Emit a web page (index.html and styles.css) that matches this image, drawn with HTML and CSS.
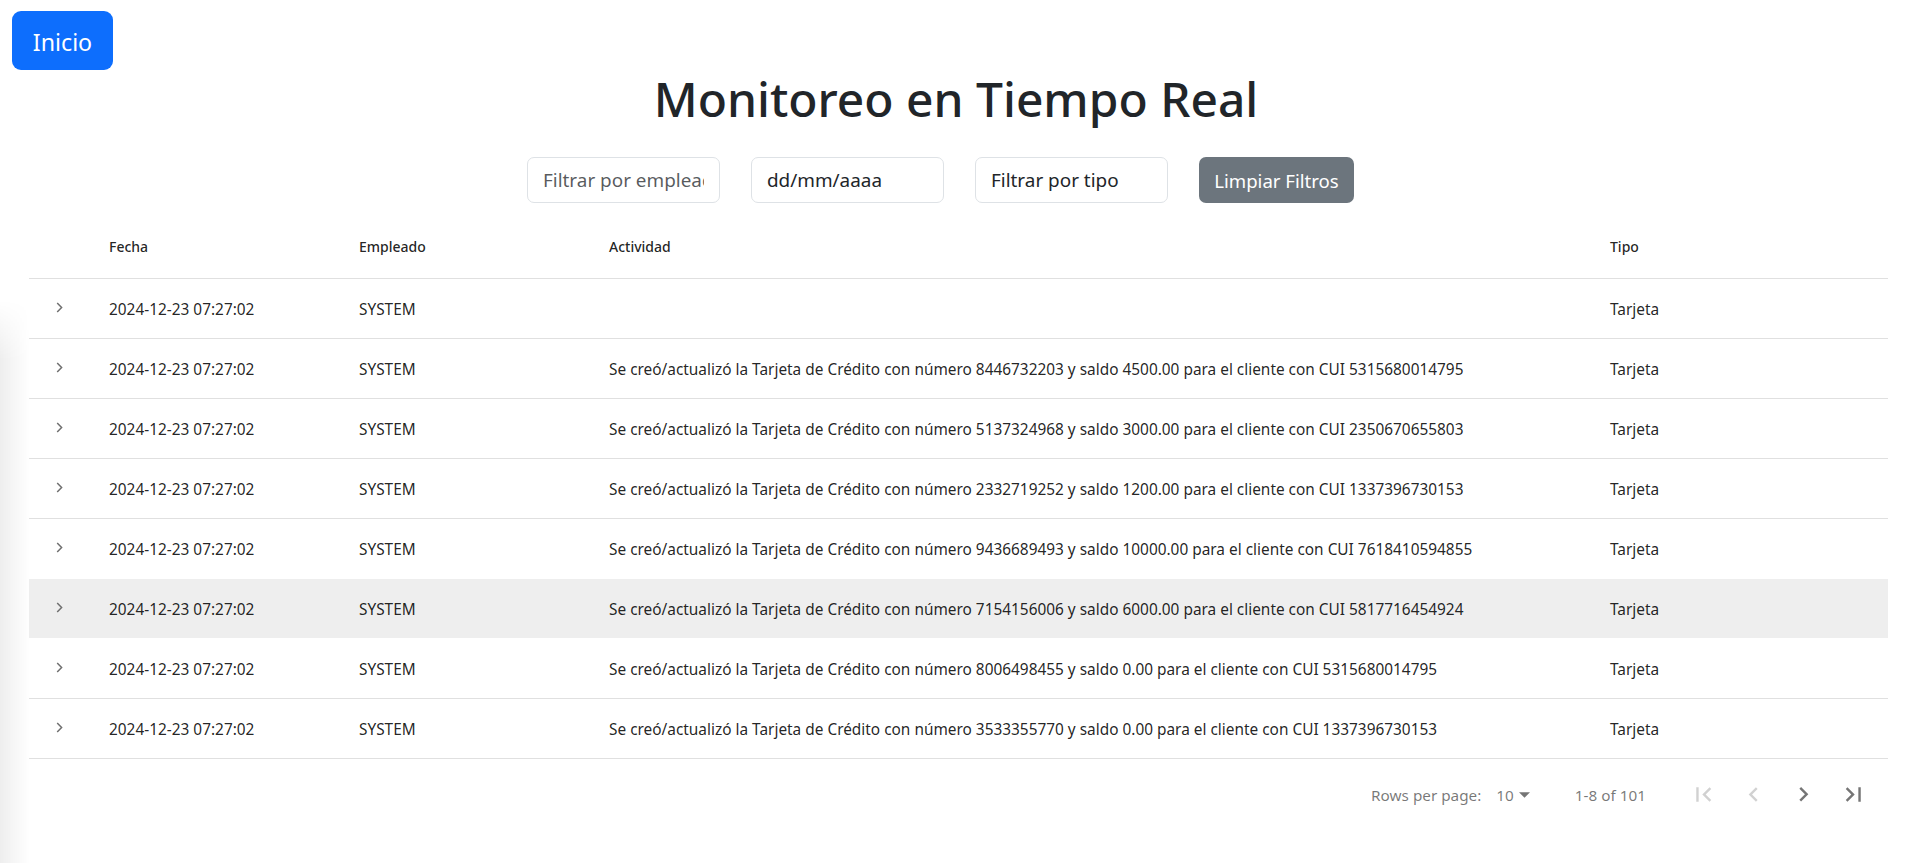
FILE: index.html
```html
<!DOCTYPE html>
<html lang="es">
<head>
<meta charset="utf-8">
<title>Monitoreo en Tiempo Real</title>
<link rel="stylesheet" href="styles.css">
</head>
<body>
<div class="edge-shadow"></div>
<button class="btn-home">Inicio</button>
<h1 class="title">Monitoreo en Tiempo Real</h1>
<div class="filters">
  <input class="filter" type="text" placeholder="Filtrar por empleado">
  <input class="filter" type="text" value="dd/mm/aaaa">
  <select class="filter filter-select"><option>Filtrar por tipo</option></select>
  <button class="clear-btn">Limpiar Filtros</button>
</div>

<div class="table">
  <div class="thead grid">
    <div></div>
    <div class="cell">Fecha</div>
    <div class="cell">Empleado</div>
    <div class="cell">Actividad</div>
    <div class="cell">Tipo</div>
  </div>

  <div class="row grid">
    <div class="expander"><svg class="chev" viewBox="0 0 7 11"><polyline points="1.2,1 5.6,5.5 1.2,10"/></svg></div>
    <div class="cell">2024-12-23 07:27:02</div>
    <div class="cell">SYSTEM</div>
    <div class="cell"></div>
    <div class="cell">Tarjeta</div>
  </div>
  <div class="row grid">
    <div class="expander"><svg class="chev" viewBox="0 0 7 11"><polyline points="1.2,1 5.6,5.5 1.2,10"/></svg></div>
    <div class="cell">2024-12-23 07:27:02</div>
    <div class="cell">SYSTEM</div>
    <div class="cell">Se creó/actualizó la Tarjeta de Crédito con número 8446732203 y saldo 4500.00 para el cliente con CUI 5315680014795</div>
    <div class="cell">Tarjeta</div>
  </div>
  <div class="row grid">
    <div class="expander"><svg class="chev" viewBox="0 0 7 11"><polyline points="1.2,1 5.6,5.5 1.2,10"/></svg></div>
    <div class="cell">2024-12-23 07:27:02</div>
    <div class="cell">SYSTEM</div>
    <div class="cell">Se creó/actualizó la Tarjeta de Crédito con número 5137324968 y saldo 3000.00 para el cliente con CUI 2350670655803</div>
    <div class="cell">Tarjeta</div>
  </div>
  <div class="row grid">
    <div class="expander"><svg class="chev" viewBox="0 0 7 11"><polyline points="1.2,1 5.6,5.5 1.2,10"/></svg></div>
    <div class="cell">2024-12-23 07:27:02</div>
    <div class="cell">SYSTEM</div>
    <div class="cell">Se creó/actualizó la Tarjeta de Crédito con número 2332719252 y saldo 1200.00 para el cliente con CUI 1337396730153</div>
    <div class="cell">Tarjeta</div>
  </div>
  <div class="row grid">
    <div class="expander"><svg class="chev" viewBox="0 0 7 11"><polyline points="1.2,1 5.6,5.5 1.2,10"/></svg></div>
    <div class="cell">2024-12-23 07:27:02</div>
    <div class="cell">SYSTEM</div>
    <div class="cell">Se creó/actualizó la Tarjeta de Crédito con número 9436689493 y saldo 10000.00 para el cliente con CUI 7618410594855</div>
    <div class="cell">Tarjeta</div>
  </div>
  <div class="row grid row-hover">
    <div class="expander"><svg class="chev" viewBox="0 0 7 11"><polyline points="1.2,1 5.6,5.5 1.2,10"/></svg></div>
    <div class="cell">2024-12-23 07:27:02</div>
    <div class="cell">SYSTEM</div>
    <div class="cell">Se creó/actualizó la Tarjeta de Crédito con número 7154156006 y saldo 6000.00 para el cliente con CUI 5817716454924</div>
    <div class="cell">Tarjeta</div>
  </div>
  <div class="row grid">
    <div class="expander"><svg class="chev" viewBox="0 0 7 11"><polyline points="1.2,1 5.6,5.5 1.2,10"/></svg></div>
    <div class="cell">2024-12-23 07:27:02</div>
    <div class="cell">SYSTEM</div>
    <div class="cell">Se creó/actualizó la Tarjeta de Crédito con número 8006498455 y saldo 0.00 para el cliente con CUI 5315680014795</div>
    <div class="cell">Tarjeta</div>
  </div>
  <div class="row grid">
    <div class="expander"><svg class="chev" viewBox="0 0 7 11"><polyline points="1.2,1 5.6,5.5 1.2,10"/></svg></div>
    <div class="cell">2024-12-23 07:27:02</div>
    <div class="cell">SYSTEM</div>
    <div class="cell">Se creó/actualizó la Tarjeta de Crédito con número 3533355770 y saldo 0.00 para el cliente con CUI 1337396730153</div>
    <div class="cell">Tarjeta</div>
  </div>

  <div class="pagination">
    <span class="rpp-label">Rows per page:</span>
    <span class="rpp-select">10<svg class="caret" viewBox="0 0 12 6"><path d="M0 0h12L6 6z"/></svg></span>
    <span class="range">1-8 of 101</span>
    <div class="pager">
      <button class="pg disabled" aria-label="First Page"><svg viewBox="0 0 24 24"><path d="M18.41 16.59L13.82 12l4.59-4.59L17 6l-6 6 6 6zM6 6h2v12H6z"/></svg></button>
      <button class="pg disabled" aria-label="Previous Page"><svg viewBox="0 0 24 24"><path d="M15.41 7.41L14 6l-6 6 6 6 1.41-1.41L10.83 12z"/></svg></button>
      <button class="pg" aria-label="Next Page"><svg viewBox="0 0 24 24"><path d="M8.59 16.34l4.58-4.59-4.58-4.59L10 5.75l6 6-6 6z"/></svg></button>
      <button class="pg" aria-label="Last Page"><svg viewBox="0 0 24 24"><path d="M5.59 7.41L10.18 12l-4.59 4.59L7 18l6-6-6-6zM16 6h2v12h-2z"/></svg></button>
    </div>
  </div>
</div>
</body>
</html>
```
FILE: styles.css
```css
* { box-sizing: border-box; }

body {
  margin: 0;
  font-family: "Noto Sans", "Open Sans", sans-serif;
  color: #212529;
  background: #fff;
}

.edge-shadow {
  position: fixed;
  left: 0;
  top: 300px;
  bottom: 0;
  width: 30px;
  background: linear-gradient(to right, rgba(0, 0, 0, 0.065), rgba(0, 0, 0, 0));
  -webkit-mask-image: linear-gradient(to bottom, transparent, #000 60px);
  mask-image: linear-gradient(to bottom, transparent, #000 60px);
  pointer-events: none;
}

.btn-home {
  display: flex;
  align-items: center;
  justify-content: center;
  width: 101px;
  height: 59px;
  margin: 11px 0 0 12px;
  padding: 4px 0 0;
  border: none;
  border-radius: 9px;
  background: #0d6efd;
  color: #fff;
  font-family: inherit;
  font-size: 23.2px;
  line-height: 1;
}

.title {
  margin: 1px 0 0;
  font-size: 47.9px;
  font-weight: 500;
  line-height: 56px;
  text-align: center;
  color: #212529;
}

.filters {
  display: flex;
  justify-content: center;
  margin-top: 30px;
}

.filter {
  width: 193px;
  height: 46px;
  margin: 0 31px 0 0;
  padding: 0 15px;
  border: 1px solid #dee2e6;
  border-radius: 7px;
  background: #fff;
  font-family: inherit;
  font-size: 18.9px;
  color: #212529;
  outline: none;
}

.filter::placeholder {
  color: rgba(33, 37, 41, 0.75);
}

.filter-select {
  -webkit-appearance: none;
  appearance: none;
}

.clear-btn {
  width: 155px;
  height: 46px;
  margin: 0 31px 0 0;
  padding: 0;
  border: none;
  border-radius: 7px;
  background: #6c757d;
  color: #fff;
  font-family: inherit;
  font-size: 18.6px;
}

.table {
  margin: 12px 24px 0 29px;
}

.grid {
  display: grid;
  grid-template-columns: 60px 250px 250px 1001px 1fr;
  align-items: center;
}

.thead {
  height: 64px;
  border-bottom: 1px solid #e0e0e0;
  font-size: 14px;
  font-weight: 500;
  color: rgba(0, 0, 0, 0.87);
}

.row {
  height: 60px;
  padding-top: 2px;
  border-bottom: 1px solid #e0e0e0;
  font-size: 15.4px;
  color: rgba(0, 0, 0, 0.87);
}

.row-hover {
  background: #eeeeee;
  border-bottom-color: #fff;
  outline: 1px solid #fff;
}

.cell {
  padding-left: 20px;
  white-space: nowrap;
}

.expander {
  display: flex;
  justify-content: center;
  padding-bottom: 4px;
}

.chev {
  width: 7px;
  height: 11px;
  fill: none;
  stroke: #6f6f6f;
  stroke-width: 1.5;
}

.pagination {
  display: flex;
  justify-content: flex-end;
  align-items: center;
  height: 71px;
  padding-right: 11px;
  font-size: 15.3px;
  color: rgba(0, 0, 0, 0.54);
}

.rpp-label {
  margin-right: 15px;
}

.rpp-select {
  display: flex;
  align-items: center;
}

.caret {
  width: 11px;
  height: 6px;
  margin-left: 5px;
  fill: rgba(0, 0, 0, 0.54);
}

.range {
  margin: 0 33px 0 45px;
}

.pager {
  display: flex;
  gap: 2px;
}

.pg {
  display: flex;
  align-items: center;
  justify-content: center;
  width: 48px;
  height: 48px;
  padding: 0;
  border: none;
  background: transparent;
}

.pg svg {
  width: 29px;
  height: 29px;
  fill: rgba(0, 0, 0, 0.54);
}

.pg.disabled svg {
  fill: rgba(0, 0, 0, 0.18);
}
```
